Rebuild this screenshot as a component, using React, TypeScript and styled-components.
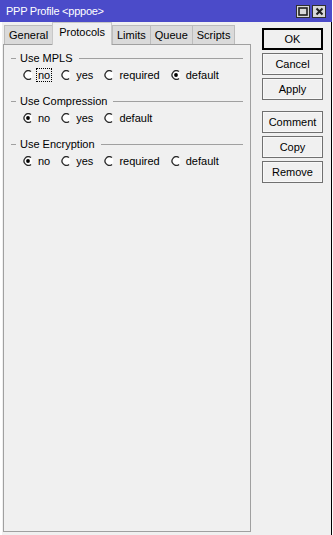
import styled, { createGlobalStyle } from 'styled-components';

const GlobalStyle = createGlobalStyle`
  html, body {
    margin: 0;
    padding: 0;
    background: #ffffff;
  }
  body {
    font-family: "Liberation Sans", Arial, sans-serif;
    font-size: 11px;
    color: #000000;
  }
`;

const Window = styled.div`
  width: 332px;
  height: 535px;
  display: flex;
  flex-direction: column;
  box-sizing: border-box;
`;

const TitleBar = styled.div`
  height: 22px;
  background-color: #4b4bc9;
  color: #ffffff;
  display: flex;
  align-items: center;
  padding: 0 6px 0 6px;
  font-size: 11px;
  letter-spacing: -0.25px;
`;

const Title = styled.div`
  flex-grow: 1;
`;

const TitleButton = styled.div`
  width: 14px;
  height: 13px;
  box-sizing: border-box;
  background-color: #d8d8d8;
  border: 1px solid #303030;
  margin-left: 2px;
  display: flex;
  align-items: center;
  justify-content: center;
`;

const Body = styled.div`
  flex: 1;
  display: flex;
  background-color: #f0f0f0;
  border-left: 2px solid #ffffff;
  border-right: 1px solid #000000;
  padding: 0 0 3px 1px;
`;

const LeftColumn = styled.div`
  width: 248px;
  display: flex;
  flex-direction: column;
`;

const TabBar = styled.div`
  height: 22px;
  display: flex;
  align-items: flex-end;
  padding-left: 1px;
`;

const Tab = styled.div<{ $active?: boolean }>`
  height: ${p => (p.$active ? 23 : 19)}px;
  box-sizing: border-box;
  padding: ${p => (p.$active ? '0 6px 4px' : '1px 4px 0')};
  display: flex;
  align-items: center;
  background-color: ${p => (p.$active ? '#f0f0f0' : '#dadada')};
  border: 1px solid ${p => (p.$active ? '#c8c8c8' : '#bcbcbc')};
  border-bottom: none;
  margin-right: ${p => (p.$active ? '0' : '-1px')};
  margin-bottom: ${p => (p.$active ? '-1px' : '0')};
  position: relative;
  z-index: ${p => (p.$active ? 1 : 0)};
  line-height: 1;
`;

const Panel = styled.div`
  flex: 1;
  border: 1px solid #a0a0a0;
  padding: 6px 7px 0 7px;
`;

const Group = styled.div`
  margin-bottom: 12px;
`;

const GroupHeader = styled.div`
  height: 14px;
  display: flex;
  align-items: center;
`;

const Dash = styled.div`
  width: 5px;
  height: 1px;
  background-color: #a0a0a0;
  margin-right: 4px;
`;

const HeaderLine = styled.div`
  flex: 1;
  height: 1px;
  background-color: #a0a0a0;
  margin-left: 6px;
`;

const RadioRow = styled.div`
  height: 14px;
  margin-top: 3px;
  display: flex;
  align-items: center;
  padding-left: 12px;
`;

const RadioItem = styled.div`
  display: flex;
  align-items: center;
  margin-right: 10px;
`;

const RadioMark = styled.svg`
  width: 10px;
  height: 10px;
  margin-right: 4px;
  flex-shrink: 0;
`;

const Label = styled.span<{ $focused?: boolean }>`
  padding: 0 1px;
  line-height: 12px;
  outline: ${p => (p.$focused ? '1px dotted #000000' : 'none')};
`;

const RightColumn = styled.div`
  display: flex;
  flex-direction: column;
  padding: 6px 0 0 11px;
`;

const Button = styled.div<{ $default?: boolean; $spaced?: boolean }>`
  width: 61px;
  height: 22px;
  box-sizing: border-box;
  border: ${p => (p.$default ? '2px solid #000000' : '1px solid #707070')};
  box-shadow: ${p => (p.$default ? 'none' : 'inset 0 0 0 1px #f8f8f8')};
  background-color: #f0f0f0;
  display: flex;
  align-items: center;
  justify-content: center;
  margin-bottom: 3px;
  margin-top: ${p => (p.$spaced ? '8px' : '0')};
  font-size: 11px;
`;

type Option = { label: string; checked?: boolean; focused?: boolean };

const groups: { title: string; options: Option[] }[] = [
  {
    title: 'Use MPLS',
    options: [
      { label: 'no', focused: true },
      { label: 'yes' },
      { label: 'required' },
      { label: 'default', checked: true },
    ],
  },
  {
    title: 'Use Compression',
    options: [{ label: 'no', checked: true }, { label: 'yes' }, { label: 'default' }],
  },
  {
    title: 'Use Encryption',
    options: [
      { label: 'no', checked: true },
      { label: 'yes' },
      { label: 'required' },
      { label: 'default' },
    ],
  },
];

const tabs = ['General', 'Protocols', 'Limits', 'Queue', 'Scripts'];

const Radio = ({ checked }: { checked?: boolean }) => (
  <RadioMark viewBox="0 0 10 10">
    <circle cx="5" cy="5" r="4.4" fill="#ffffff" />
    <path d="M8 1.6 A4.3 4.3 0 1 0 8 8.4" fill="none" stroke="#2a2a2a" strokeWidth="1.3" />
    {checked && <circle cx="5" cy="5" r="1.9" fill="#000000" />}
  </RadioMark>
);

const App = () => {
  return (
    <>
      <GlobalStyle />
      <Window>
        <TitleBar>
          <Title>PPP Profile &lt;pppoe&gt;</Title>
          <TitleButton>
            <svg width="10" height="9" viewBox="0 0 10 9">
              <rect x="1" y="1" width="8" height="7" fill="none" stroke="#202020" strokeWidth="1.6" />
            </svg>
          </TitleButton>
          <TitleButton>
            <svg width="9" height="9" viewBox="0 0 9 9">
              <path d="M1.5 1.5 L7.5 7.5 M7.5 1.5 L1.5 7.5" stroke="#202020" strokeWidth="2" />
            </svg>
          </TitleButton>
        </TitleBar>
        <Body>
          <LeftColumn>
            <TabBar>
              {tabs.map(t => (
                <Tab key={t} $active={t === 'Protocols'}>
                  {t}
                </Tab>
              ))}
            </TabBar>
            <Panel>
              {groups.map(g => (
                <Group key={g.title}>
                  <GroupHeader>
                    <Dash />
                    <span>{g.title}</span>
                    <HeaderLine />
                  </GroupHeader>
                  <RadioRow>
                    {g.options.map(o => (
                      <RadioItem key={o.label}>
                        <Radio checked={o.checked} />
                        <Label $focused={o.focused}>{o.label}</Label>
                      </RadioItem>
                    ))}
                  </RadioRow>
                </Group>
              ))}
            </Panel>
          </LeftColumn>
          <RightColumn>
            <Button $default>OK</Button>
            <Button>Cancel</Button>
            <Button>Apply</Button>
            <Button $spaced>Comment</Button>
            <Button>Copy</Button>
            <Button>Remove</Button>
          </RightColumn>
        </Body>
      </Window>
    </>
  );
};

export default App;
